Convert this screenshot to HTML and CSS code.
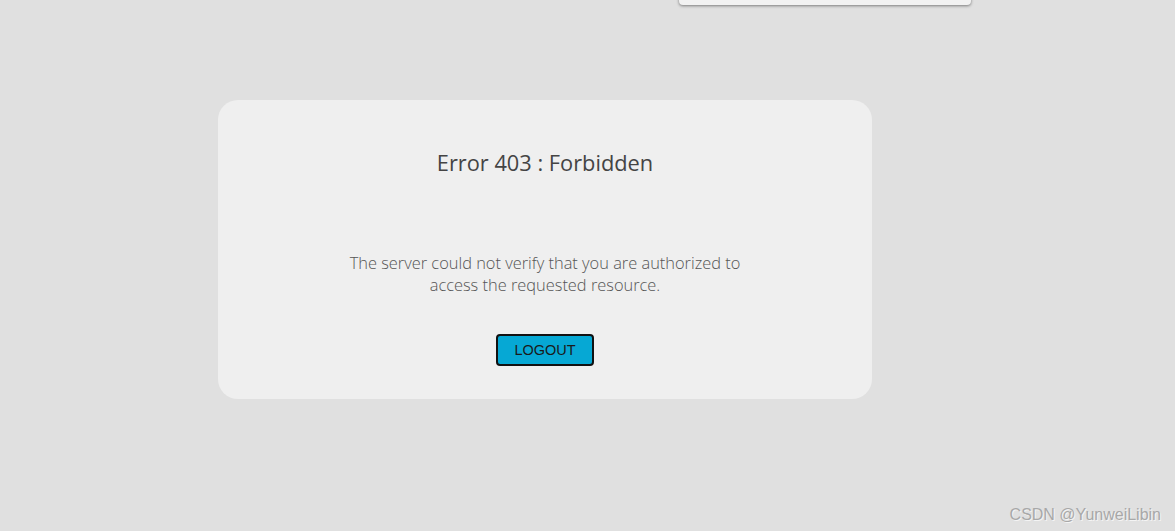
FILE: index.html
```html
<!doctype html>
<html lang="en">
  <head>
    <meta charset="UTF-8" />
    <meta name="viewport" content="width=device-width, initial-scale=1.0" />
    <title>Error 403 : Forbidden</title>
    <link rel="stylesheet" href="styles.css">
  </head>
  <body>
    <div class="menu-popup"></div>

    <div class="error-card">
      <h1 class="error-title">Error 403 : Forbidden</h1>
      <p class="error-text">The server could not verify that you are authorized to access the requested resource.</p>
      <div class="error-actions">
        <button class="btn-logout">LOGOUT</button>
      </div>
    </div>

    <div class="watermark">CSDN @YunweiLibin</div>
  </body>
</html>
```

FILE: styles.css
```css
body {
  margin: 0;
  padding: 0;
  min-height: 100vh;
  background: #e0e0e0;
  font-family: "Open Sans", sans-serif;
  position: relative;
  overflow: hidden;
}

.menu-popup {
  position: absolute;
  top: -20px;
  left: 679px;
  width: 292px;
  height: 25px;
  background: #f2f2f2;
  border-radius: 4px;
  box-shadow: 0 1px 3px rgba(0, 0, 0, 0.45);
}

.error-card {
  box-sizing: border-box;
  width: 654px;
  margin: 100px 0 0 218px;
  padding: 48px 0 33px;
  background: #efefef;
  border-radius: 20px;
  text-align: center;
}

.error-title {
  margin: 0;
  font-size: 21.8px;
  line-height: 30px;
  font-weight: 400;
  color: #444;
}

.error-text {
  max-width: 410px;
  margin: 74px auto 38px;
  font-size: 16.4px;
  line-height: 22px;
  font-weight: 300;
  color: #555;
}

.error-actions {
  display: flex;
  justify-content: center;
}

.btn-logout {
  width: 98px;
  height: 32px;
  padding: 0;
  background: #06a8d4;
  border: 2px solid #111;
  border-radius: 4px;
  font-family: "Liberation Sans", Arial, sans-serif;
  font-size: 14.5px;
  color: #1a1a1a;
  cursor: pointer;
}

.watermark {
  position: absolute;
  right: 14px;
  bottom: 7px;
  font-family: "Liberation Sans", Arial, sans-serif;
  font-size: 16px;
  color: #a8a8a8;
  text-shadow: 1px 1px 0 #f4f4f4;
}
```
